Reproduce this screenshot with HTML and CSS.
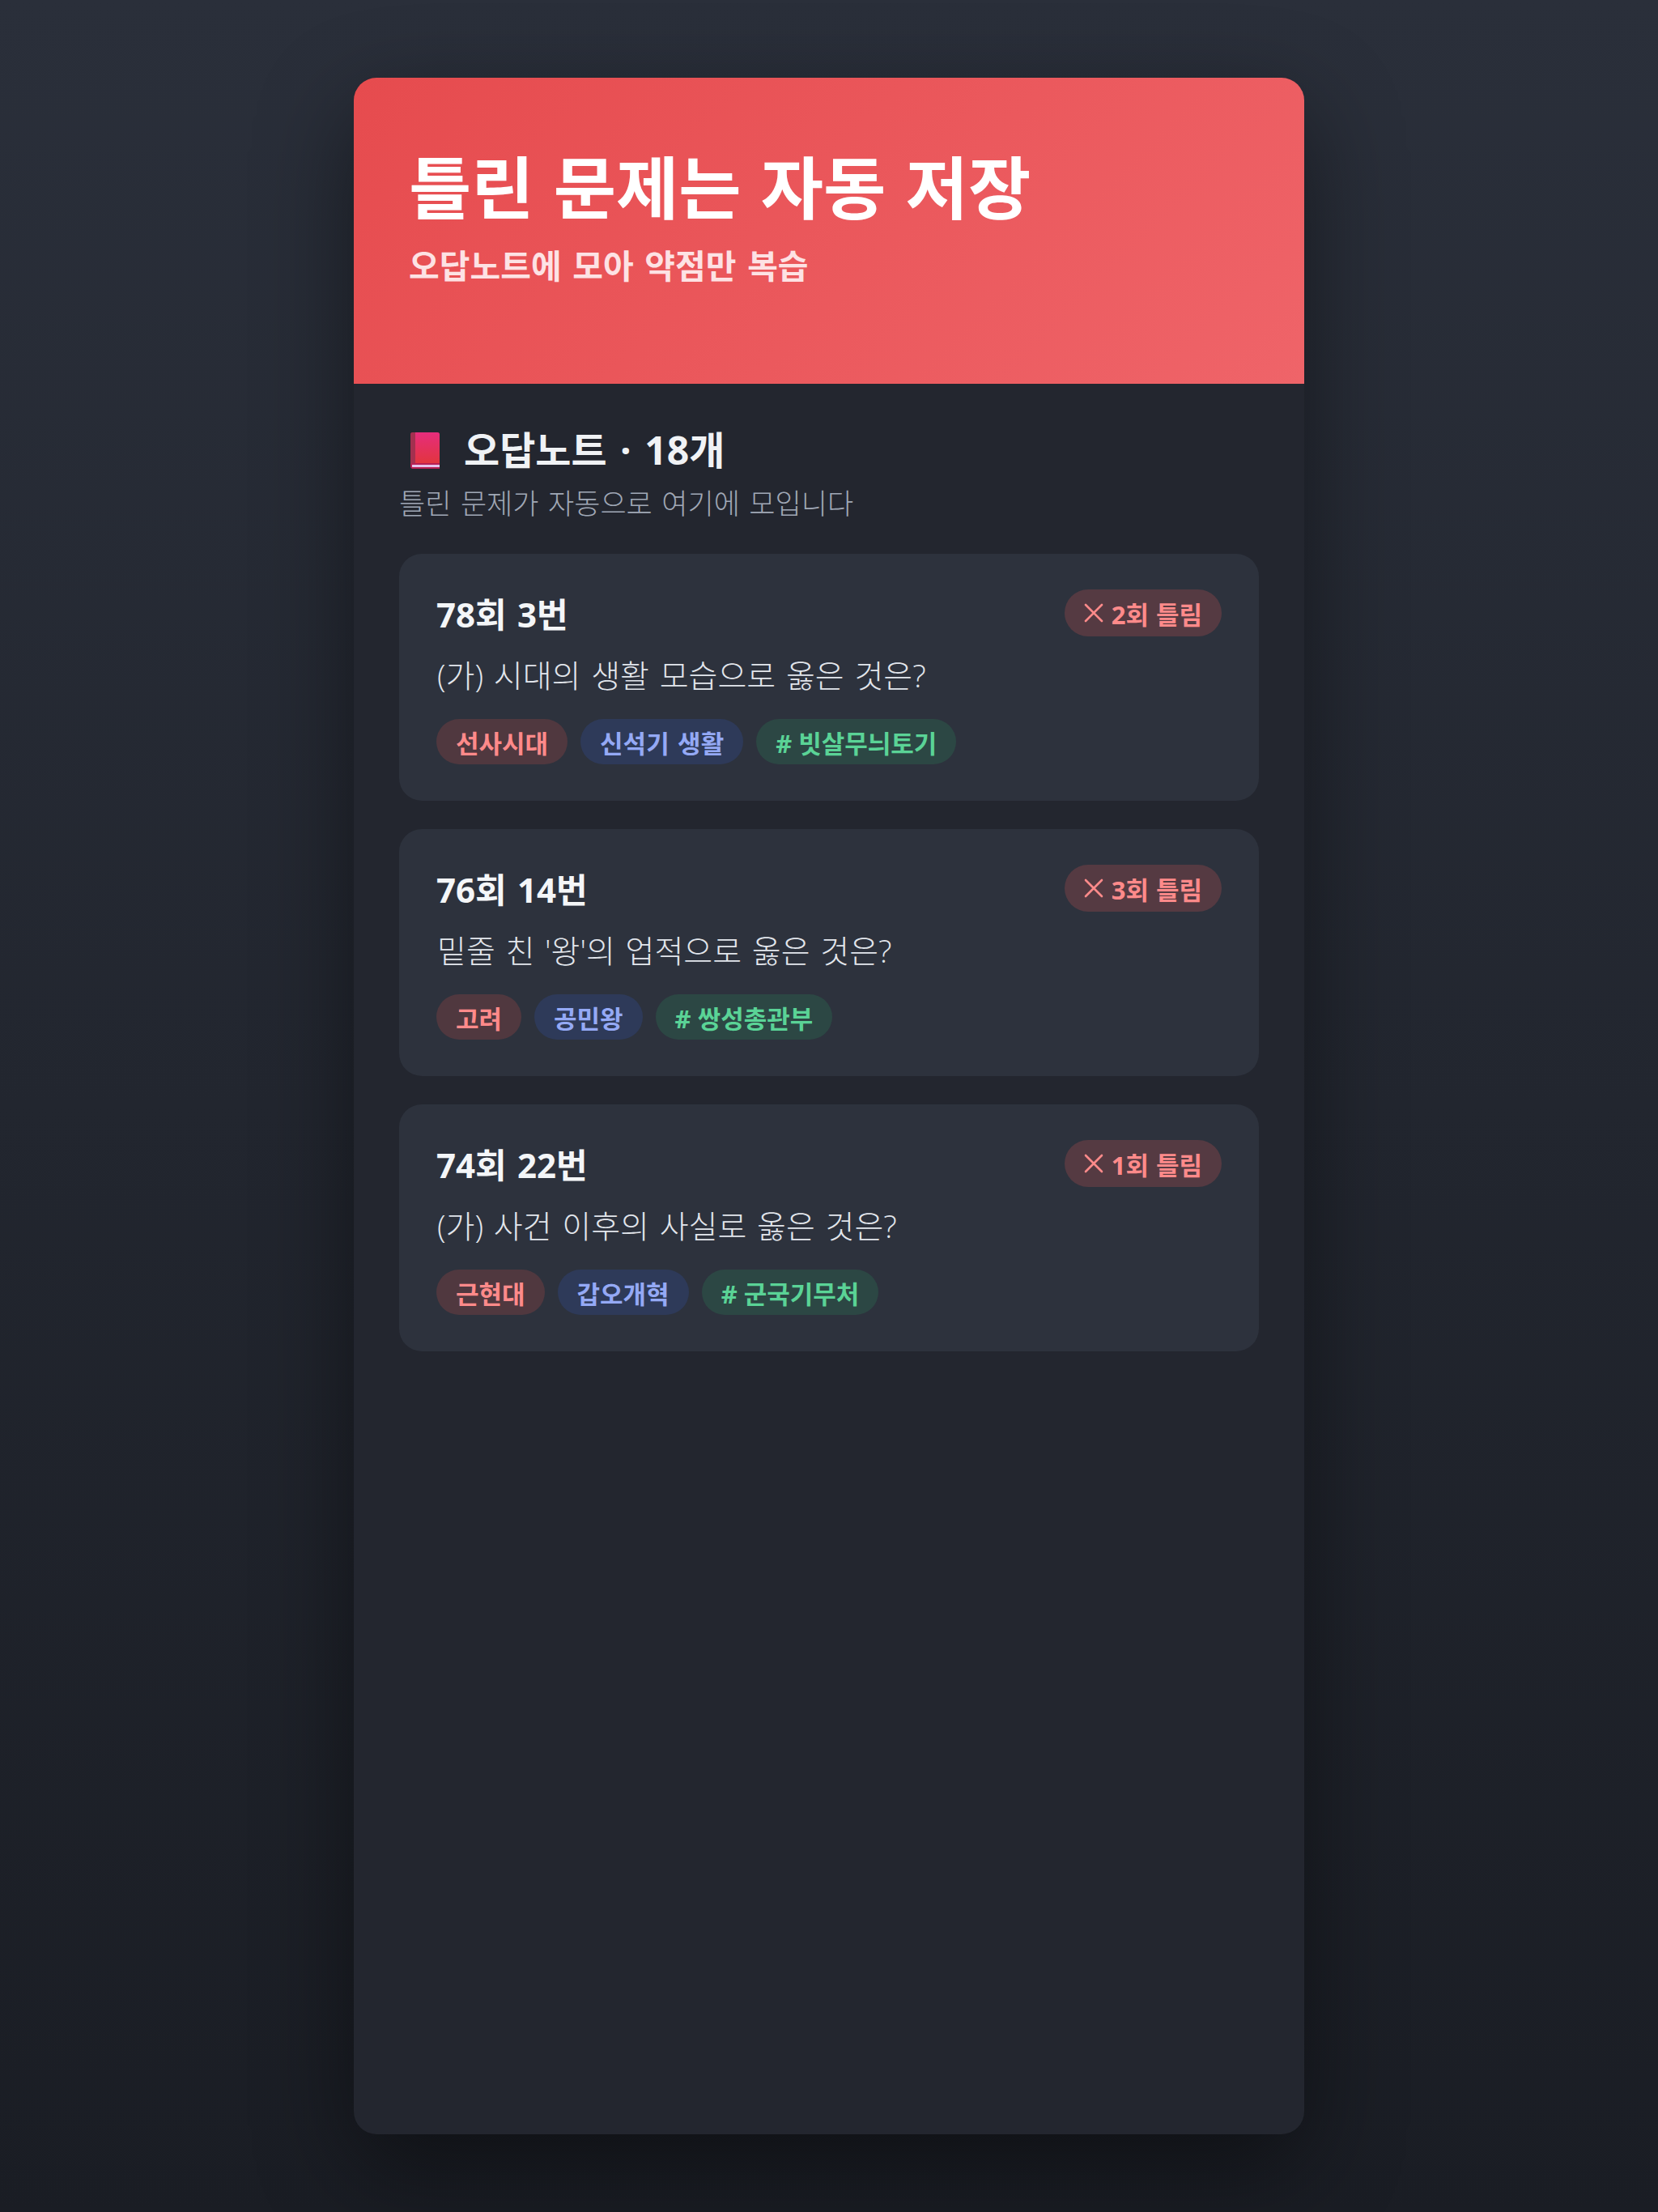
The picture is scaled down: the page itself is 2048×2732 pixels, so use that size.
FILE: index.html
```html
<!DOCTYPE html>
<html lang="ko">
<head>
<meta charset="utf-8">
<title>오답노트</title>
<link rel="stylesheet" href="styles.css">
</head>
<body>
<main class="phone">
  <header class="hero">
    <h1>틀린 문제는 자동 저장</h1>
    <p>오답노트에 모아 약점만 복습</p>
  </header>
  <section class="content">
    <h2 class="heading"><svg class="book" viewBox="0 0 36 45"><defs><linearGradient id="cover" x1="0" y1="0" x2="0" y2="1"><stop offset="0" stop-color="#e62d7c"/><stop offset="1" stop-color="#e2353f"/></linearGradient></defs><path d="M3 0H33a3 3 0 0 1 3 3V45H3a3 3 0 0 1-3-3V3a3 3 0 0 1 3-3Z" fill="#b81f54"/><path d="M6 0H33a3 3 0 0 1 3 3V38H6Z" fill="url(#cover)"/><path d="M0 3a3 3 0 0 1 3-3H6V38H2L0 40Z" fill="#a3304f"/><path d="M2 40H36V43H2Z" fill="#e6c3ea"/></svg>오답노트 · 18개</h2>
    <p class="sub">틀린 문제가 자동으로 여기에 모입니다</p>
    <div class="list">
    <article class="item">
      <div class="top"><span class="num">78회 3번</span><span class="badge"><svg class="x" viewBox="0 0 24 24"><path d="M2 2L22 22M22 2L2 22"/></svg>2회 틀림</span></div>
      <p class="q">(가) 시대의 생활 모습으로 옳은 것은?</p>
      <div class="tags"><span class="tag red">선사시대</span><span class="tag blue">신석기 생활</span><span class="tag green"># 빗살무늬토기</span></div>
    </article>
    <article class="item">
      <div class="top"><span class="num">76회 14번</span><span class="badge"><svg class="x" viewBox="0 0 24 24"><path d="M2 2L22 22M22 2L2 22"/></svg>3회 틀림</span></div>
      <p class="q">밑줄 친 '왕'의 업적으로 옳은 것은?</p>
      <div class="tags"><span class="tag red">고려</span><span class="tag blue">공민왕</span><span class="tag green"># 쌍성총관부</span></div>
    </article>
    <article class="item">
      <div class="top"><span class="num">74회 22번</span><span class="badge"><svg class="x" viewBox="0 0 24 24"><path d="M2 2L22 22M22 2L2 22"/></svg>1회 틀림</span></div>
      <p class="q">(가) 사건 이후의 사실로 옳은 것은?</p>
      <div class="tags"><span class="tag red">근현대</span><span class="tag blue">갑오개혁</span><span class="tag green"># 군국기무처</span></div>
    </article>
    </div>
  </section>
</main>
</body>
</html>
```
FILE: styles.css
```css
* { box-sizing: border-box; margin: 0; padding: 0; }
html, body { height: 2732px; }
body {
  background: linear-gradient(180deg, #2a2f3a 0%, #1a1d24 100%);
  font-family: "Open Sans", "Noto Sans CJK KR", sans-serif;
  word-spacing: 2.4px;
  padding-top: 96px;
  overflow: hidden;
}
.phone {
  width: 1174px;
  height: 2540px;
  margin: 0 auto;
  background: #23262f;
  border-radius: 28px;
  overflow: hidden;
  box-shadow: 0 40px 120px rgba(0,0,0,.45);
}
.hero {
  height: 378px;
  padding: 88px 68px 0;
  background: linear-gradient(135deg, #e64b4e 0%, #ef6469 100%);
}
.hero h1 { font-size: 84px; line-height: 96px; font-weight: 700; color: #fff; }
.hero p { margin-top: 24px; font-size: 41px; line-height: 48px; font-weight: 700; word-spacing: 3px; color: #fde2e4; }
.content { padding: 52px 56px; }
.heading { display: flex; align-items: center; height: 60px; padding-left: 14px; font-size: 48px; line-height: 60px; font-weight: 700; word-spacing: 4px; color: #f0f2f5; }
.book { width: 36px; height: 45px; margin-right: 30px; flex: none; }
.sub { margin-top: 12px; font-size: 35px; line-height: 48px; font-weight: 300; color: #a0a8b6; }
.list { display: flex; flex-direction: column; gap: 35px; margin-top: 38px; }
.item { height: 305px; padding: 44px 46px; background: #2d323d; border-radius: 28px; }
.top { display: flex; justify-content: space-between; align-items: center; }
.num { position: relative; top: 2px; font-size: 42px; line-height: 58px; font-weight: 700; color: #f4f6f8; }
.badge { display: flex; align-items: center; height: 58px; padding: 0 24px; border-radius: 29px; background: #553a42; color: #ff8a8a; font-size: 31px; font-weight: 700; word-spacing: 1px; }
.x { width: 24px; height: 24px; margin-right: 10px; fill: none; stroke: #ff8a8a; stroke-width: 2.6; stroke-linecap: round; }
.q { margin-top: 22px; padding-left: 1px; font-size: 39px; line-height: 52px; font-weight: 300; word-spacing: 2.6px; color: #e2e6ec; }
.tags { display: flex; gap: 16px; margin-top: 28px; }
.tag { display: flex; align-items: center; height: 56px; padding: 0 24px; border-radius: 28px; font-size: 31px; font-weight: 700; }
.red { background: #50383f; color: #ff8a8a; }
.blue { background: #2e3a59; color: #94a9f5; }
.green { background: #2c4744; color: #5ad396; word-spacing: 0; }
```
